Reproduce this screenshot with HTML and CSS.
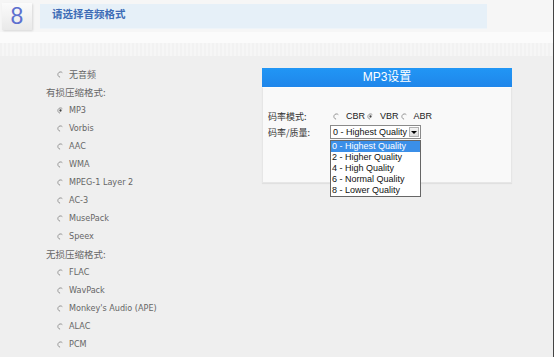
FILE: index.html
```html
<!DOCTYPE html>
<html lang="zh-CN">
<head>
<meta charset="utf-8">
<title>请选择音频格式</title>
<link rel="stylesheet" href="styles.css">
</head>
<body>
<div class="page">
  <div class="top">
    <div class="step">8</div>
    <div class="title-bar"><span>请选择音频格式</span></div>
  </div>
  <div class="band-light"></div>
  <div class="band-hatch"></div>
  <div class="main">
    <div class="formats">
      <div class="opt"><svg class="rd" viewBox="0 0 8 8"><path d="M6.1 1.9A3 3 0 1 0 3.5 7"/></svg>无音频</div>
      <div class="group">有损压缩格式:</div>
      <div class="opt"><svg class="rd" viewBox="0 0 8 8"><path d="M6.1 1.9A3 3 0 1 0 3.5 7"/><circle cx="4" cy="4" r="1.3"/></svg>MP3</div>
      <div class="opt"><svg class="rd" viewBox="0 0 8 8"><path d="M6.1 1.9A3 3 0 1 0 3.5 7"/></svg>Vorbis</div>
      <div class="opt"><svg class="rd" viewBox="0 0 8 8"><path d="M6.1 1.9A3 3 0 1 0 3.5 7"/></svg>AAC</div>
      <div class="opt"><svg class="rd" viewBox="0 0 8 8"><path d="M6.1 1.9A3 3 0 1 0 3.5 7"/></svg>WMA</div>
      <div class="opt"><svg class="rd" viewBox="0 0 8 8"><path d="M6.1 1.9A3 3 0 1 0 3.5 7"/></svg>MPEG-1 Layer 2</div>
      <div class="opt"><svg class="rd" viewBox="0 0 8 8"><path d="M6.1 1.9A3 3 0 1 0 3.5 7"/></svg>AC-3</div>
      <div class="opt"><svg class="rd" viewBox="0 0 8 8"><path d="M6.1 1.9A3 3 0 1 0 3.5 7"/></svg>MusePack</div>
      <div class="opt"><svg class="rd" viewBox="0 0 8 8"><path d="M6.1 1.9A3 3 0 1 0 3.5 7"/></svg>Speex</div>
      <div class="group">无损压缩格式:</div>
      <div class="opt"><svg class="rd" viewBox="0 0 8 8"><path d="M6.1 1.9A3 3 0 1 0 3.5 7"/></svg>FLAC</div>
      <div class="opt"><svg class="rd" viewBox="0 0 8 8"><path d="M6.1 1.9A3 3 0 1 0 3.5 7"/></svg>WavPack</div>
      <div class="opt"><svg class="rd" viewBox="0 0 8 8"><path d="M6.1 1.9A3 3 0 1 0 3.5 7"/></svg>Monkey's Audio (APE)</div>
      <div class="opt"><svg class="rd" viewBox="0 0 8 8"><path d="M6.1 1.9A3 3 0 1 0 3.5 7"/></svg>ALAC</div>
      <div class="opt"><svg class="rd" viewBox="0 0 8 8"><path d="M6.1 1.9A3 3 0 1 0 3.5 7"/></svg>PCM</div>
    </div>
    <div class="panel">
      <div class="panel-head">MP3设置</div>
      <div class="panel-body">
        <div class="row">
          <span class="lbl">码率模式:</span>
          <span class="radios">
            <svg class="rd rd-dark" viewBox="0 0 8 8"><path d="M6.1 1.9A3 3 0 1 0 3.5 7"/></svg><span class="rt">CBR</span>
            <svg class="rd rd-dark" viewBox="0 0 8 8"><path d="M6.1 1.9A3 3 0 1 0 3.5 7"/><circle cx="4" cy="4" r="1.3"/></svg><span class="rt">VBR</span>
            <svg class="rd rd-dark" viewBox="0 0 8 8"><path d="M6.1 1.9A3 3 0 1 0 3.5 7"/></svg><span class="rt">ABR</span>
          </span>
        </div>
        <div class="row">
          <span class="lbl">码率/质量:</span>
          <div class="select-wrap">
            <div class="select"><span class="sel-text">0 - Highest Quality</span><span class="arrow"></span></div>
            <ul class="dropdown">
              <li class="active">0 - Highest Quality</li>
              <li>2 - Higher Quality</li>
              <li>4 - High Quality</li>
              <li>6 - Normal Quality</li>
              <li>8 - Lower Quality</li>
            </ul>
          </div>
        </div>
      </div>
    </div>
  </div>
</div>
</body>
</html>
```
FILE: styles.css
```css
* { box-sizing: border-box; }
html, body { margin: 0; padding: 0; }
body { background: #efefef; }
.page {
  width: 554px;
  height: 357px;
  background: #efefef;
  border-right: 1px solid #444;
  overflow: hidden;
  font-family: "Liberation Sans", "Noto Sans CJK SC", sans-serif;
}
.top {
  height: 32px;
  background: #f6f6f6;
  display: flex;
  align-items: flex-start;
  padding-top: 3px;
}
.step {
  margin-left: 2px;
  width: 30px;
  height: 27px;
  background: linear-gradient(#fbfbfb, #e9e9e9);
  box-shadow: 1px 1px 2px rgba(0,0,0,0.12);
  color: #5d70cf;
  font-size: 23px;
  line-height: 27px;
  text-align: center;
}
.title-bar {
  margin-left: 8px;
  margin-top: 1px;
  width: 447px;
  height: 25px;
  background: #e6f0f8;
  border-bottom: 1px solid #eef4f9;
  display: flex;
  align-items: center;
  padding-left: 12px;
  padding-bottom: 5px;
}
.title-bar span {
  color: #3d6cb6;
  font-size: 10.5px;
  font-weight: bold;
  font-family: "Noto Sans CJK SC", sans-serif;
}
.band-light { height: 11px; background: #fbfbfb; }
.band-hatch {
  height: 13px;
  background: repeating-linear-gradient(90deg, #f2f2f2 0 2px, #f6f6f6 2px 4px);
}
.main {
  display: flex;
  align-items: flex-start;
}
.formats {
  width: 216px;
  margin-left: 46px;
  margin-top: 9px;
  color: #666;
  font-size: 9px;
}
.opt, .group {
  height: 18px;
  display: flex;
  align-items: center;
}
.opt {
  padding-left: 11px;
  font-family: "DejaVu Sans Condensed", "Noto Sans CJK SC", sans-serif;
}
.group { font-family: "Noto Sans CJK SC", sans-serif; font-size: 9.5px; }
.rd {
  width: 7px;
  height: 7px;
  margin-right: 5px;
  flex: none;
}
.rd path { fill: none; stroke: #8a8a8a; stroke-width: 1; }
.rd circle { fill: #444; }
.rd-dark path { stroke: #888; }
.panel {
  width: 250px;
  margin-top: 12px;
}
.panel-head {
  height: 19px;
  background: linear-gradient(#2196f5, #1f86ea);
  color: #fff;
  font-size: 12px;
  text-align: center;
  line-height: 19px;
  font-family: "Liberation Sans", "Noto Sans CJK SC", sans-serif;
}
.panel-body {
  height: 96px;
  background: #f9f9f9;
  border: 1px solid #e6e6e6;
  border-top: 1px solid #fdfdfd;
  box-shadow: 0 1px 1px rgba(0,0,0,0.06);
  padding-top: 20px;
  padding-left: 5px;
  font-size: 9px;
  color: #222;
}
.row {
  height: 16px;
  display: flex;
  align-items: center;
}
.lbl {
  width: 62px;
  font-family: "Noto Sans CJK SC", sans-serif;
  font-size: 9px;
  color: #333;
}
.radios {
  display: flex;
  align-items: center;
  padding-left: 3px;
}
.radios .rd { margin-right: 6px; }
.rt { margin-right: 2px; }
.select-wrap {
  position: relative;
  align-self: flex-start;
  margin-top: 1px;
}
.select {
  width: 91px;
  height: 14px;
  background: #fff;
  border: 1px solid #8a8a8a;
  display: flex;
  align-items: center;
  padding-left: 2px;
  font-size: 9px;
  color: #111;
}
.sel-text { flex: 1; white-space: nowrap; }
.arrow {
  width: 10px;
  height: 10px;
  margin-right: 1px;
  background: linear-gradient(#f4f4f4, #dcdcdc);
  border: 1px solid #b0b0b0;
  position: relative;
}
.arrow::after {
  content: "";
  position: absolute;
  left: 1px;
  top: 3px;
  border-left: 3px solid transparent;
  border-right: 3px solid transparent;
  border-top: 3px solid #000;
}
.dropdown {
  position: absolute;
  top: 15px;
  left: 0;
  width: 91px;
  margin: 0;
  padding: 0;
  list-style: none;
  background: #fff;
  border: 1px solid #666;
  font-size: 9px;
  color: #111;
}
.dropdown li {
  height: 11px;
  line-height: 11px;
  padding-left: 1px;
  white-space: nowrap;
}
.dropdown li.active {
  background: #3b8fe8;
  color: #fff;
}
```
